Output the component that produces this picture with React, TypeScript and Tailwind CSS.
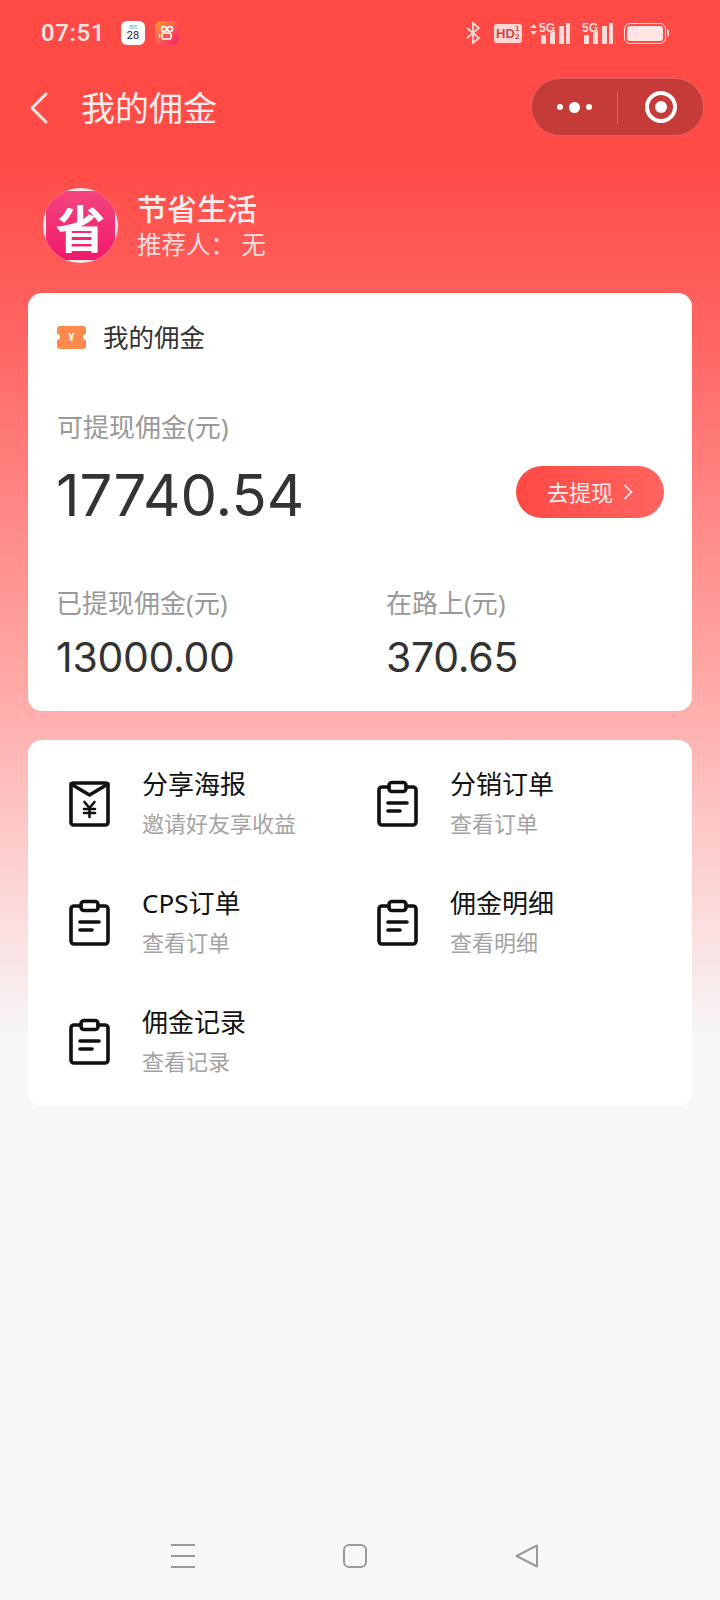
import React from "react";

const ClipboardIcon = () => (
  <svg width="44" height="48" viewBox="0 0 44 48" fill="none" stroke="#111" strokeWidth="3.6" strokeLinecap="round" strokeLinejoin="round">
    <path d="M13 7H6a3 3 0 0 0-3 3v32a3 3 0 0 0 3 3h31a3 3 0 0 0 3-3V10a3 3 0 0 0-3-3h-7" />
    <rect x="13" y="2.500" width="17" height="9" rx="3" />
    <path d="M12 23h19M12 31h12" />
  </svg>
);

const EnvelopeIcon = () => (
  <svg width="44" height="48" viewBox="0 0 44 48" fill="none" stroke="#111" strokeWidth="3.6" strokeLinecap="round" strokeLinejoin="round">
    <rect x="3" y="3" width="37" height="42" rx="2.500" />
    <path d="M3 4l18.500 11L40 4" />
    <path d="M16.500 22l5 6 5-6M21.500 28v9M16 29h11M16 33h11" strokeWidth="2.600" />
  </svg>
);

const menuItems = [
  { title: "分享海报", sub: "邀请好友享收益", icon: <EnvelopeIcon /> },
  { title: "分销订单", sub: "查看订单", icon: <ClipboardIcon /> },
  { title: "CPS订单", sub: "查看订单", icon: <ClipboardIcon /> },
  { title: "佣金明细", sub: "查看明细", icon: <ClipboardIcon /> },
  { title: "佣金记录", sub: "查看记录", icon: <ClipboardIcon /> },
];

const Signal = ({ arrows }: { arrows?: boolean }) => (
  <svg width={arrows ? 42 : 32} height="24" viewBox={arrows ? "-10 0 42 24" : "0 0 32 24"} fill="#ffdcda">
    {arrows && <path d="M-9 7l3.500-4 3.500 4zM-9 10h7l-3.500 4z" />}
    <rect x="2" y="14" width="5" height="9" />
    <rect x="11" y="10" width="5" height="13" />
    <rect x="20" y="5" width="5" height="18" />
    <rect x="27" y="2" width="4" height="21" />
    <text x="0" y="11" fontSize="12" fontWeight="700" fontFamily="'Liberation Sans', sans-serif" stroke="#ff4a45" strokeWidth="0.800" paintOrder="stroke">5G</text>
  </svg>
);

export default function App() {
  return (
    <div className="w-[720px] h-[1600px] flex flex-col overflow-hidden bg-[linear-gradient(180deg,#ff4a45_0px,#ff4a45_150px,#ff6360_320px,#ffb0ae_720px,#fbdfe0_930px,#f7f7f7_1040px)] font-['Noto_Sans','Noto_Sans_CJK_SC',sans-serif]">
      {/* status bar */}
      <div className="h-[66px] flex items-center pl-[41px] pr-[51px] text-[#ffe6e4]">
        <span className="text-[24px] tracking-[0.6px] font-medium font-['Roboto',sans-serif]">07:51</span>
        <div className="ml-[16px] w-[24px] h-[24px] rounded-[6px] bg-white flex flex-col items-center justify-center">
          <span className="text-[4px] leading-[5px] text-[#3aa0d8]">周四</span>
          <span className="text-[11px] leading-[11px] text-[#223] font-['Roboto',sans-serif]">28</span>
        </div>
        <div className="ml-[10px] w-[24px] h-[24px] rounded-[6px] bg-[linear-gradient(135deg,#ff9a2e,#f5206e)] flex items-center justify-center">
          <svg width="18" height="18" viewBox="0 0 18 18" fill="none" stroke="#fff" strokeWidth="1.500">
            <circle cx="6" cy="5" r="2.500" />
            <circle cx="12" cy="5" r="2.500" />
            <rect x="4" y="9" width="9" height="6" rx="1.500" />
            <path d="M1.500 10v4" />
          </svg>
        </div>
        <div className="ml-auto flex items-center">
          <svg width="14" height="22" viewBox="0 0 14 22" fill="none" stroke="#ffdcda" strokeWidth="1.800">
            <path d="M1 6l12 10-6 5V1l6 5L1 16" />
          </svg>
          <div className="ml-[14px] w-[28px] h-[19px] rounded-[3px] bg-[#ffd6d4] flex items-center justify-center text-[#c8484a] text-[13px] font-bold leading-none font-['Liberation_Sans',sans-serif]">
            HD<span className="text-[8px] leading-[8px] w-[5px] break-all">12</span>
          </div>
          <div className="ml-[7px]">
            <Signal arrows />
          </div>
          <div className="ml-[11px]">
            <Signal />
          </div>
          <div className="ml-[10px] w-[42px] h-[21px] rounded-[6px] border-[1.5px] border-[#ffdcda] p-[2px]">
            <div className="w-full h-full rounded-[3px] bg-[#ffe6e4]" />
          </div>
          <div className="ml-[1px] w-[2px] h-[8px] rounded-r-sm bg-[#ffdcda]" />
        </div>
      </div>

      {/* nav */}
      <div className="h-[84px] flex items-center pl-[29px] pr-[16px]">
        <svg width="20" height="34" viewBox="0 0 20 34" fill="none" stroke="#ffe6e4" strokeWidth="3" strokeLinecap="round" strokeLinejoin="round">
          <path d="M17 3L3 17l14 14" />
        </svg>
        <h1 className="ml-[32px] text-[34px] text-[#ffeceb]">我的佣金</h1>
        <div className="ml-auto -mt-[2px] w-[173px] h-[58px] rounded-full bg-[#c53b38] border border-[#e2625f] flex items-center">
          <div className="w-[85px] flex items-center justify-center gap-[6px]">
            <span className="w-[6px] h-[6px] rounded-full bg-white" />
            <span className="w-[11px] h-[11px] rounded-full bg-white" />
            <span className="w-[6px] h-[6px] rounded-full bg-white" />
          </div>
          <div className="w-px h-[34px] bg-[#e2625f]" />
          <div className="flex-1 flex items-center justify-center">
            <div className="w-[32px] h-[32px] rounded-full border-[4px] border-white flex items-center justify-center">
              <span className="w-[12px] h-[12px] rounded-full bg-white" />
            </div>
          </div>
        </div>
      </div>

      {/* profile */}
      <div className="mt-[38px] ml-[43px] flex items-center">
        <div className="w-[75px] h-[75px] rounded-full overflow-hidden bg-[#ffe6ea] flex items-center justify-center">
          <div className="w-[69px] h-[69px] shrink-0 rounded-[20px] bg-[linear-gradient(180deg,#f4457f,#f0186c)] flex items-center justify-center">
            <span className="text-[50px] leading-none font-bold text-white font-['Noto_Sans_CJK_SC',sans-serif]">省</span>
          </div>
        </div>
        <div className="ml-[19px]">
          <div className="text-[30px] leading-[38px] font-medium text-[#ffeceb]">节省生活</div>
          <div className="text-[24.500px] leading-[34px] text-[#ffdedd]">推荐人： 无</div>
        </div>
      </div>

      {/* commission card */}
      <div className="mt-[30px] mx-[28px] h-[418px] rounded-[14px] bg-white px-[29px] pt-[27px]">
        <div className="flex items-center h-[34px]">
          <div className="relative w-[29px] h-[23px] rounded-[3px] bg-[#ff8a4c] flex items-center justify-center text-[11px] font-bold text-white">
            ¥
            <span className="absolute -left-[3px] top-[8px] w-[6px] h-[6px] rounded-full bg-white" />
            <span className="absolute -right-[3px] top-[8px] w-[6px] h-[6px] rounded-full bg-white" />
          </div>
          <span className="ml-[17px] text-[25.500px] text-[#333]">我的佣金</span>
        </div>

        <div className="mt-[56px] text-[26px] leading-[34px] text-[#999]">可提现佣金(元)</div>
        <div className="mt-[18px] flex items-center justify-between">
          <span className="-ml-[1px] text-[58px] leading-[66px] text-[#333] font-['Inter',sans-serif]">17740.54</span>
          <button className="mr-[-1px] -mt-[6px] w-[148px] h-[52px] rounded-full bg-[linear-gradient(90deg,#ff4a45,#ff6460)] flex items-center justify-center gap-[10px] text-[22px] text-[#ffeceb]">
            去提现
            <svg width="10" height="18" viewBox="0 0 10 18" fill="none" stroke="#ffdedd" strokeWidth="1.800">
              <path d="M1.500 2l7 7-7 7" />
            </svg>
          </button>
        </div>

        <div className="mt-[58px] grid grid-cols-[329px_1fr]">
          <div>
            <div className="-ml-px text-[26px] leading-[34px] text-[#999]">已提现佣金(元)</div>
            <div className="mt-[11px] -ml-px text-[41px] tracking-[-0.3px] leading-[52px] text-[#333] font-['Inter',sans-serif]">13000.00</div>
          </div>
          <div>
            <div className="text-[26px] leading-[34px] text-[#999]">在路上(元)</div>
            <div className="mt-[11px] text-[41px] tracking-[-0.3px] leading-[52px] text-[#333] font-['Inter',sans-serif]">370.65</div>
          </div>
        </div>
      </div>

      {/* menu card */}
      <div className="mt-[29px] mx-[28px] h-[366px] rounded-[14px] bg-white pt-[26px]">
        <div className="grid grid-cols-[308px_1fr] auto-rows-[119px]">
          {menuItems.map((item) => (
            <div key={item.title} className="flex items-start">
              <div className="ml-[40px] mt-[14px] w-[44px]">{item.icon}</div>
              <div className="ml-[30px]">
                <div className="text-[26px] leading-[36px] text-[#111]">{item.title}</div>
                <div className="mt-[6px] text-[22px] leading-[30px] text-[#a3a3a3]">{item.sub}</div>
              </div>
            </div>
          ))}
        </div>
      </div>

      {/* system nav */}
      <div className="mt-auto h-[92px] pt-[4px] pr-[11px] flex items-center justify-center gap-[148px]">
        <div className="w-[24px] h-[24px] flex flex-col justify-between">
          <div className="h-[2px] bg-[#999]" />
          <div className="h-[2px] bg-[#999]" />
          <div className="h-[2px] bg-[#999]" />
        </div>
        <div className="w-[24px] h-[24px] rounded-[6px] border-2 border-[#999]" />
        <svg width="24" height="24" viewBox="0 0 24 24" fill="none" stroke="#999" strokeWidth="2" strokeLinejoin="round">
          <path d="M22 1.500v21L1.500 12z" />
        </svg>
      </div>
    </div>
  );
}
